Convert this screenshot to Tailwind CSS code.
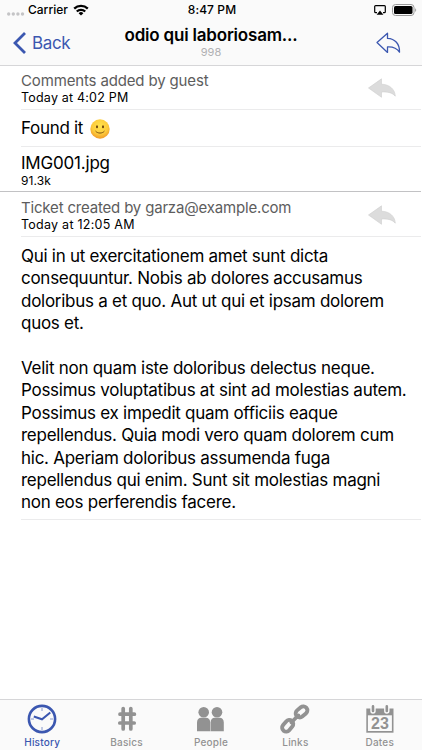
<!DOCTYPE html>
<html lang="en">
    <head>
        <meta charset="UTF-8">
        <meta name="viewport" content="width=device-width, initial-scale=1.0">
        <script src="https://cdn.jsdelivr.net/npm/@tailwindcss/browser@4"></script>
        <title>Ticket 998</title>
    </head>
    <body class="bg-white">
        <div class="w-[422px] h-[750px] flex flex-col overflow-hidden bg-white text-black font-['Inter','Liberation_Sans',sans-serif]">
            <header class="h-[66px] shrink-0 bg-[#fafafa] border-b border-[#d6d6d8]">
                <!-- status bar -->
                <div class="h-5 grid grid-cols-3 items-center pl-[7px] pr-[5px] text-[12px] leading-5">
                    <div class="flex items-center">
                        <svg class="w-[18px] h-[5px] mt-2" viewBox="0 0 18 5" fill="#c4c4c6">
                            <circle cx="1.7" cy="2" r="1.7"/>
                            <circle cx="6.3" cy="2" r="1.7"/>
                            <circle cx="10.9" cy="2" r="1.7"/>
                            <circle cx="15.5" cy="2" r="1.7"/>
                        </svg>
                        <span class="ml-[3px] font-medium">Carrier</span>
                        <svg class="w-4 h-3 ml-[5px]" viewBox="0 0 16 12" fill="none" stroke="#000" stroke-width="2.3">
                            <path d="M1.2 4.600a9.800 9.800 0 0 1 13.600 0"/>
                            <path d="M3.800 7.500a6 6 0 0 1 8.400 0"/>
                            <path d="M8 11.600 5.600 9.200a3.400 3.400 0 0 1 4.800 0z" fill="#000" stroke="none"/>
                        </svg>
                    </div>
                    <div class="text-center font-medium tracking-[0.1px]">8:47 PM</div>
                    <div class="flex items-center justify-end">
                        <svg class="w-3 h-[10px] mr-[6px]" viewBox="0 0 12 10">
                            <path d="M3 7.6H1.6a.9.9 0 0 1-.9-.9V1.6c0-.5.4-.9.9-.9h8.8c.5 0 .9.4.9.9v5.1c0 .5-.4.9-.9.9H9" fill="none" stroke="#000" stroke-width="1.2"/>
                            <path d="M6 5.6 9.4 9.8H2.6z"/>
                        </svg>
                        <svg class="w-[25px] h-3" viewBox="0 0 25 12">
                            <rect x=".5" y=".5" width="21.5" height="11" rx="3" fill="none" stroke="#9a9a9a"/>
                            <rect x="2" y="2" width="18.5" height="8" rx="1.6"/>
                            <path d="M23.2 4.2c1.3.4 1.3 3.2 0 3.6z" fill="#9a9a9a"/>
                        </svg>
                    </div>
                </div>
                <!-- navigation bar -->
                <div class="h-[45px] grid grid-cols-[110px_1fr_110px]">
                    <a href="#" class="flex items-center pl-[13px] pt-px text-[#3b57b0]">
                        <svg class="w-[13px] h-[22px]" viewBox="0 0 13 22" fill="none" stroke="#3b57b0" stroke-width="2.8">
                            <path d="M12 1 2 11l10 10"/>
                        </svg>
                        <span class="ml-[6px] text-[17px] leading-[22px] tracking-[-0.35px]">Back</span>
                    </a>
                    <div class="text-center whitespace-nowrap pt-[5px]">
                        <h1 class="text-[17px] leading-[20px] font-semibold tracking-[-0.2px]">odio qui laboriosam...</h1>
                        <p class="text-[11px] leading-[14px] text-[#b1b1b3]">998</p>
                    </div>
                    <a href="#" class="flex items-center justify-end pr-[21px]">
                        <svg class="w-[25px] h-[22px]" viewBox="0 0 25 22" fill="none" stroke="#3b57b0" stroke-width="1.3" stroke-linejoin="round">
                            <path d="M1 10.600 11.500 1.200v5.200c7.500.3 12.300 5.400 12 13.800-2.800-4.400-6.500-5.600-12-5.300v5.500z"/>
                        </svg>
                    </a>
                </div>
            </header>

            <main class="flex-1 pl-[21px] pr-px">
                <section>
                    <div class="h-[44px] flex items-center justify-between border-b border-[#ebebec] pr-6">
                        <div class="pt-[3px]">
                            <h2 class="text-[15px] leading-[18px] text-[#5d5d5d] tracking-[-0.15px]">Comments added by guest</h2>
                            <p class="text-[12.5px] leading-[16px] tracking-[0.2px]">Today at 4:02 PM</p>
                        </div>
                        <svg class="w-[30px] h-[20px]" viewBox="0 0 30 20" fill="#dcdcdc" stroke="#cfcfcf" stroke-width=".6" stroke-linejoin="round">
                            <path d="M1.500 10 14.500.800v5.400c8 .2 13.500 5 13.800 12-3-3.500-7.500-4.600-13.800-4.200v5.300z"/>
                        </svg>
                    </div>
                    <div class="h-[37px] flex items-center border-b border-[#ebebec] pt-[2px] text-[17px]">
                        <span class="tracking-[-0.3px]">Found it</span>
                        <svg class="w-5 h-5 ml-[7px]" viewBox="0 0 20 20" role="img" aria-label="Smiling face">
                            <defs>
                                <radialGradient id="face" cx=".5" cy=".35" r=".68">
                                    <stop offset="0" stop-color="#ffe34d"/>
                                    <stop offset=".6" stop-color="#fdcb3c"/>
                                    <stop offset="1" stop-color="#ee9426"/>
                                </radialGradient>
                            </defs>
                            <circle cx="10" cy="10" r="9.700" fill="url(#face)"/>
                            <ellipse cx="7" cy="7.700" rx="1" ry="1.500" fill="#6b3f0c"/>
                            <ellipse cx="13" cy="7.700" rx="1" ry="1.500" fill="#6b3f0c"/>
                            <path d="M5.800 12.400c1.800 2.300 6.600 2.300 8.400 0" fill="none" stroke="#6b3f0c" stroke-width=".9" stroke-linecap="round"/>
                        </svg>
                    </div>
                    <div class="h-[44px] flex flex-col justify-center pt-[2px]">
                        <p class="text-[17px] leading-[20px] tracking-[-0.2px]">IMG001.jpg</p>
                        <p class="text-[12px] leading-[15px] tracking-[0.1px]">91.3k</p>
                    </div>
                </section>

                <section class="-ml-[21px] pl-[21px] border-t border-[#c2c2c4]">
                    <div class="h-[45px] flex items-center justify-between border-b border-[#ebebec] pr-6">
                        <div class="pt-[4px]">
                            <h2 class="text-[15px] leading-[18px] text-[#5d5d5d] tracking-[-0.18px]">Ticket created by garza@example.com</h2>
                            <p class="text-[12.5px] leading-[16px] tracking-[0.25px]">Today at 12:05 AM</p>
                        </div>
                        <svg class="w-[30px] h-[20px] mt-px" viewBox="0 0 30 20" fill="#dcdcdc" stroke="#cfcfcf" stroke-width=".6" stroke-linejoin="round">
                            <path d="M1.500 10 14.500.800v5.400c8 .2 13.500 5 13.800 12-3-3.500-7.500-4.600-13.800-4.200v5.300z"/>
                        </svg>
                    </div>
                    <div class="h-[283px] pt-2 border-b border-[#ebebec] text-[17px] leading-[22.4px] tracking-[-0.27px] whitespace-nowrap">
                        <p>Qui in ut exercitationem amet sunt dicta<br>
                        consequuntur. Nobis ab dolores accusamus<br>
                        doloribus a et quo. Aut ut qui et ipsam dolorem<br>
                        quos et.</p>
                        <p class="mt-[22.4px]">Velit non quam iste doloribus delectus neque.<br>
                        Possimus voluptatibus at sint ad molestias autem.<br>
                        Possimus ex impedit quam officiis eaque<br>
                        repellendus. Quia modi vero quam dolorem cum<br>
                        hic. Aperiam doloribus assumenda fuga<br>
                        repellendus qui enim. Sunt sit molestias magni<br>
                        non eos perferendis facere.</p>
                    </div>
                </section>
            </main>

            <!-- tab bar -->
            <nav class="h-[51px] shrink-0 grid grid-cols-5 bg-[#fafafa] border-t border-[#d6d6d8] text-[10px] leading-3 font-medium tracking-[0.2px] text-[#929292]">
                <a href="#" class="flex flex-col items-center pt-1 text-[#3b57b0]">
                    <svg class="w-[30px] h-[30px]" viewBox="0 0 30 30" fill="none" stroke="#3b57b0">
                        <circle cx="15" cy="15" r="13.100" stroke-width="2.600"/>
                        <path d="M6.800 12.500 15 15.300l8.300-6.800" stroke-width="2"/>
                        <path d="M15 4v3M15 23v3M4 15h3M23 15h3" stroke-width="1" opacity=".6"/>
                    </svg>
                    <span class="mt-[2px]">History</span>
                </a>
                <a href="#" class="flex flex-col items-center pt-1">
                    <svg class="w-[30px] h-[30px]" viewBox="0 0 30 30" fill="none" stroke="#929292" stroke-width="3.700" stroke-linecap="round">
                        <path d="M11.200 4.600v20.400M18.800 4.600v20.400M8 10.200h14.400M7.800 19h14.400"/>
                    </svg>
                    <span class="mt-[2px]">Basics</span>
                </a>
                <a href="#" class="flex flex-col items-center pt-1">
                    <svg class="w-[30px] h-[30px]" viewBox="0 0 30 30" fill="#929292">
                        <circle cx="7.700" cy="8.200" r="5.300"/>
                        <circle cx="21" cy="8.200" r="5.300"/>
                        <path d="M1 27.200V18.500c0-3 1.700-4.700 4.200-4.700h4.800c2.500 0 4.200 1.700 4.200 4.700v8.700z"/>
                        <path d="M14.600 27.200V18.500c0-3 1.700-4.700 4.200-4.700h4.800c2.500 0 4.200 1.700 4.200 4.700v8.700z"/>
                    </svg>
                    <span class="mt-[2px]">People</span>
                </a>
                <a href="#" class="flex flex-col items-center pt-1">
                    <svg class="w-[30px] h-[30px]" viewBox="0 0 30 30" fill="none" stroke="#929292" stroke-width="3.900">
                        <rect x="-6.400" y="-4" width="12.800" height="8" rx="4" transform="translate(21.500 7.900) rotate(-40)"/>
                        <rect x="-6.400" y="-4" width="12.800" height="8" rx="4" transform="translate(7.700 21.800) rotate(-50)"/>
                        <path d="M11.300 18.400 18.500 11.300" stroke-width="3.600" stroke-linecap="round"/>
                    </svg>
                    <span class="mt-[2px]">Links</span>
                </a>
                <a href="#" class="flex flex-col items-center pt-1">
                    <svg class="w-[30px] h-[30px]" viewBox="0 0 30 30">
                        <path d="M1.300 4.500h27.200v24.200H1.300z" fill="#929292"/>
                        <path d="M2.900 11.300h24v15.700h-24z" fill="#fafafa"/>
                        <path d="M8 2v5M21.800 2v5" stroke="#fafafa" stroke-width="5.400" stroke-linecap="round"/>
                        <path d="M8 2.400v4.600M21.800 2.400v4.600" stroke="#929292" stroke-width="2.600" stroke-linecap="round"/>
                        <text x="14.900" y="24.900" text-anchor="middle" fill="#929292" font-family="Liberation Sans, sans-serif" font-weight="700" font-size="16" letter-spacing="0">23</text>
                    </svg>
                    <span class="mt-[2px]">Dates</span>
                </a>
            </nav>
        </div>
    </body>
</html>
